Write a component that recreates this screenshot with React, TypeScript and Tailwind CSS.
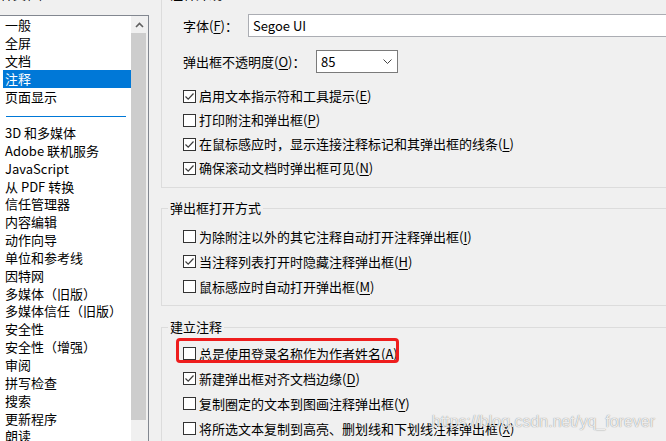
import React from 'react';

const Accel = ({ k }: { k: string }) => (
  <>
    (<span className="underline underline-offset-[2px]">{k}</span>)
  </>
);

const Check = () => (
  <svg width="11" height="11" viewBox="0 0 11 11" fill="none">
    <path d="M1.5 5.5 L4.2 8.2 L9.5 2.5" stroke="#3c3c3c" strokeWidth="1.2" />
  </svg>
);

const CheckRow = ({
  checked,
  label,
  k,
  h,
}: {
  checked?: boolean;
  label: string;
  k: string;
  h: string;
}) => (
  <div className={`flex items-center ${h}`}>
    <span className="flex size-[13px] shrink-0 items-center justify-center border border-[#333] bg-white">
      {checked && <Check />}
    </span>
    <span className="ml-[3px] whitespace-nowrap">
      {label}
      <Accel k={k} />
    </span>
  </div>
);

const topItems = ['一般', '全屏', '文档', '注释', '页面显示'];
const moreItems = [
  '3D 和多媒体',
  'Adobe 联机服务',
  'JavaScript',
  '从 PDF 转换',
  '信任管理器',
  '内容编辑',
  '动作向导',
  '单位和参考线',
  '因特网',
  '多媒体（旧版）',
  '多媒体信任（旧版）',
  '安全性',
  '安全性（增强）',
  '审阅',
  '拼写检查',
  '搜索',
  '更新程序',
  '朗读',
];

export default function App() {
  return (
    <div className="relative flex h-[441px] w-[666px] overflow-hidden bg-[#f0f0f0] font-['Noto_Sans_CJK_SC',sans-serif] text-[13px] text-black">
      {/* Category list */}
      <div className="-mt-[15px] flex w-[149px] shrink-0 flex-col">
        <div className="mb-[12px] h-[18px] leading-[18px] whitespace-nowrap">种类(G)：</div>
        <div className="flex h-[440px] border-t border-r border-[#828790]">
          <div className="flex-1 bg-white pl-[3px]">
            {topItems.map((t) => (
              <div
                key={t}
                className={`h-[18px] pl-[2px] leading-[18px] whitespace-nowrap ${
                  t === '注释' ? 'bg-[#0078d7] text-white' : ''
                }`}
              >
                {t}
              </div>
            ))}
            <div className="h-[18px] pt-[10px] pl-[3px]">
              <div className="h-px w-[120px] bg-[#0078d7]" />
            </div>
            {moreItems.map((t) => (
              <div key={t} className="h-[17.85px] pl-[2px] leading-[17.85px] whitespace-nowrap">
                {t}
              </div>
            ))}
          </div>
          <div className="flex w-[17px] flex-col bg-[#f0f0f0]">
            <div className="flex h-[17px] items-center justify-center">
              <svg width="9" height="6" viewBox="0 0 9 6" fill="none">
                <path d="M1 5 L4.5 1.5 L8 5" stroke="#606060" strokeWidth="1.6" />
              </svg>
            </div>
            <div className="h-[387px] w-[15px] bg-[#cdcdcd]" />
          </div>
        </div>
      </div>

      {/* Settings */}
      <div className="-mt-[15px] ml-[12px] flex flex-col">
        <fieldset className="w-[560px] border border-[#dcdcdc]">
          <legend className="ml-[6px] px-[2px] leading-[18px]">注释外观</legend>
          <div className="pt-[11px] pb-[7px] pl-[21px]">
            <div className="flex h-[23px] items-center">
              <span className="w-[65px] whitespace-nowrap">
                字体<Accel k="F" />：
              </span>
              <div className="flex h-[23px] w-[420px] items-center border border-[#abadb3] bg-white pl-[4px]">
                Segoe UI
              </div>
            </div>
            <div className="mt-[13px] flex h-[23px] items-center">
              <span className="w-[133px] whitespace-nowrap">
                弹出框不透明度<Accel k="O" />：
              </span>
              <div className="flex h-[23px] w-[82px] items-center justify-between border border-[#7a7a7a] bg-white pr-[5px] pl-[4px]">
                <span>85</span>
                <svg width="9" height="5" viewBox="0 0 9 5" fill="none">
                  <path d="M0.5 0.5 L4.5 4.5 L8.5 0.5" stroke="#444" strokeWidth="1" />
                </svg>
              </div>
            </div>
            <div className="mt-[11px]">
              <CheckRow h="h-[24px]" checked label="启用文本指示符和工具提示" k="E" />
              <CheckRow h="h-[24px]" label="打印附注和弹出框" k="P" />
              <CheckRow h="h-[24px]" checked label="在鼠标感应时，显示连接注释标记和其弹出框的线条" k="L" />
              <CheckRow h="h-[24px]" checked label="确保滚动文档时弹出框可见" k="N" />
            </div>
          </div>
        </fieldset>

        <fieldset className="mt-[11px] w-[560px] border border-[#dcdcdc]">
          <legend className="ml-[6px] px-[2px] leading-[18px]">弹出框打开方式</legend>
          <div className="pt-[7px] pb-[6px] pl-[21px]">
            <CheckRow h="h-[25px]" label="为除附注以外的其它注释自动打开注释弹出框" k="I" />
            <CheckRow h="h-[25px]" checked label="当注释列表打开时隐藏注释弹出框" k="H" />
            <CheckRow h="h-[25px]" label="鼠标感应时自动打开弹出框" k="M" />
          </div>
        </fieldset>

        <fieldset className="mt-[12px] w-[560px] border border-[#dcdcdc]">
          <legend className="ml-[6px] px-[2px] leading-[18px]">建立注释</legend>
          <div className="pt-[5px] pb-[6px] pl-[21px]">
            <div className="relative">
              <CheckRow h="h-[25px]" label="总是使用登录名称作为作者姓名" k="A" />
              <div className="absolute -top-[3px] -left-[7px] h-[25px] w-[223px] rounded-[4px] border-[3px] border-[#ee1d1d]" />
            </div>
            <CheckRow h="h-[25px]" checked label="新建弹出框对齐文档边缘" k="D" />
            <CheckRow h="h-[25px]" label="复制圈定的文本到图画注释弹出框" k="Y" />
            <CheckRow h="h-[25px]" label="将所选文本复制到高亮、删划线和下划线注释弹出框" k="X" />
          </div>
        </fieldset>
      </div>

      {/* Watermark */}
      <div className="pointer-events-none absolute top-[412px] right-[11px] font-['Liberation_Sans',sans-serif] text-[16px] leading-[20px] whitespace-nowrap text-white/85 [text-shadow:0_0_1px_rgba(0,0,0,0.55)]">
        https://blog.csdn.net/yq_forever
      </div>
    </div>
  );
}
